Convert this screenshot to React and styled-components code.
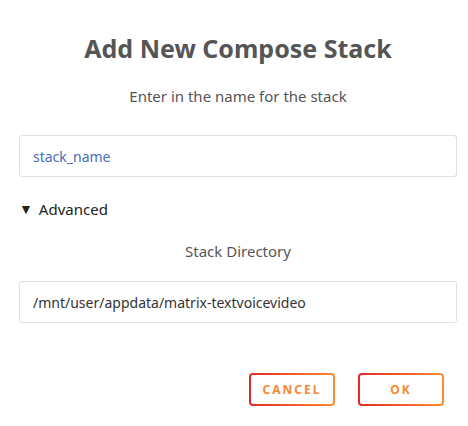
import React, { useState } from 'react';
import styled, { createGlobalStyle } from 'styled-components';

const GlobalStyle = createGlobalStyle`
  html, body {
    margin: 0;
    padding: 0;
    background: #fff;
  }
  body {
    font-family: "Noto Sans", "Open Sans", sans-serif;
  }
`;

const Dialog = styled.div`
  width: 468px;
  height: 426px;
  box-sizing: border-box;
  padding: 0 11px 0 19px;
  display: flex;
  flex-direction: column;
  background: #fff;
`;

const Title = styled.h2`
  margin: 30px 0 0;
  text-align: center;
  font-size: 25px;
  line-height: 36px;
  font-weight: 700;
  color: #555;
`;

const Label = styled.div`
  margin-top: ${props => props.top || 0}px;
  text-align: center;
  font-size: 15px;
  line-height: 22px;
  color: #555;
`;

const Field = styled.input`
  margin-top: ${props => props.top || 0}px;
  width: 438px;
  height: 42px;
  box-sizing: border-box;
  padding: 0 13px;
  border: 1px solid #e0e0e0;
  border-radius: 3px;
  font-family: inherit;
  font-size: 14px;
  color: #333;
  outline: none;

  &::placeholder {
    color: #486dba;
  }
`;

const Summary = styled.div`
  margin-top: 21px;
  display: flex;
  align-items: center;
  gap: 6px;
  font-size: 15px;
  line-height: 22px;
  color: #222;
  cursor: pointer;
`;

const Arrow = styled.span`
  font-size: 14px;
  line-height: 1;
`;

const Actions = styled.div`
  margin-top: 50px;
  display: flex;
  justify-content: flex-end;
  gap: 23px;
  padding-right: 13px;
`;

const Button = styled.button`
  width: 86px;
  height: 33px;
  border: 2px solid transparent;
  border-radius: 4px;
  background:
    linear-gradient(#fff, #fff) padding-box,
    linear-gradient(90deg, #e22828 0%, #ff8c2f 100%) border-box;
  font-family: inherit;
  font-size: 12px;
  font-weight: 700;
  letter-spacing: 2px;
  color: #f68a32;
  text-transform: uppercase;
  cursor: pointer;
`;

export default function App() {
  const [open, setOpen] = useState(true);

  return (
    <>
      <GlobalStyle />
      <Dialog>
        <Title>Add New Compose Stack</Title>
        <Label top={19}>Enter in the name for the stack</Label>
        <Field top={28} placeholder="stack_name" />
        <Summary onClick={() => setOpen(!open)}>
          <Arrow>{open ? '▼' : '▶'}</Arrow>
          Advanced
        </Summary>
        {open && (
          <>
            <Label top={20}>Stack Directory</Label>
            <Field top={19} defaultValue="/mnt/user/appdata/matrix-textvoicevideo" />
          </>
        )}
        <Actions>
          <Button>Cancel</Button>
          <Button>Ok</Button>
        </Actions>
      </Dialog>
    </>
  );
}
